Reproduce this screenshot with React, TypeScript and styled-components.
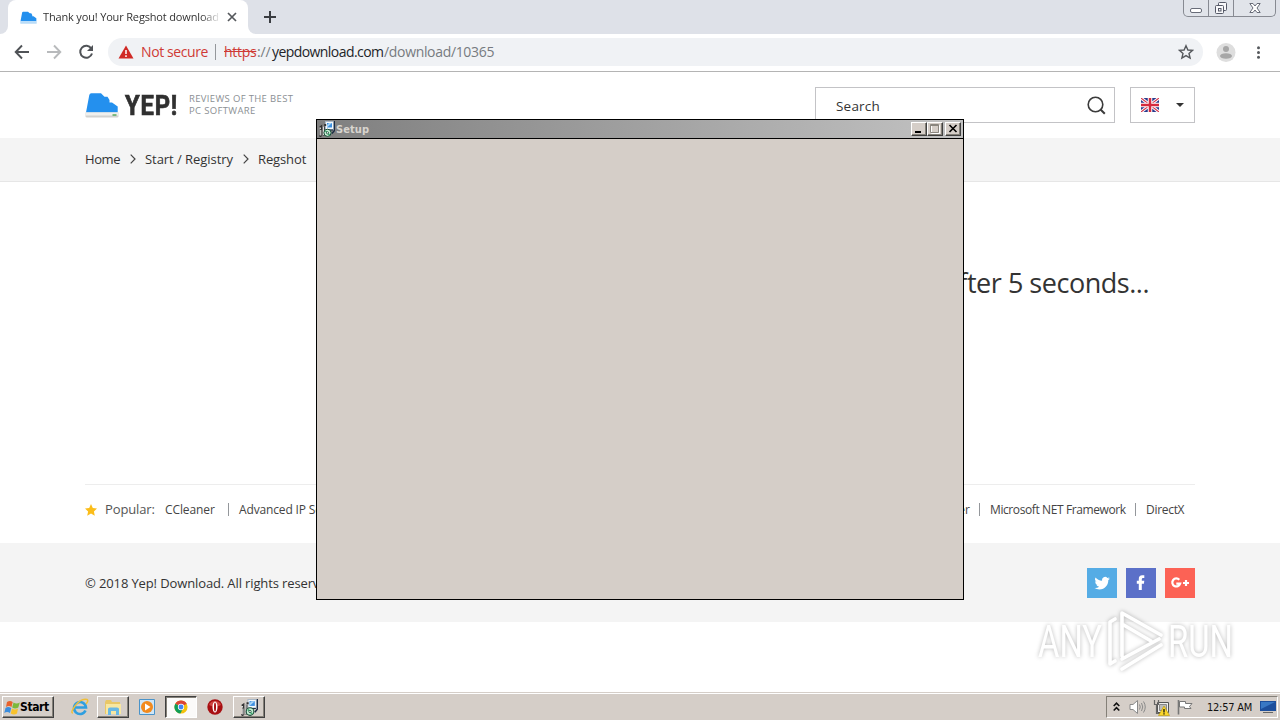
import React from "react";
import styled, { createGlobalStyle, css } from "styled-components";

const GlobalStyle = createGlobalStyle`
  * { box-sizing: border-box; }
  body { margin: 0; background: #fff; overflow: hidden; }
  svg { display: block; flex: none; }
`;

const ui = `"Open Sans", "Noto Sans", sans-serif`;
const tahoma = `"DejaVu Sans Condensed", "DejaVu Sans", sans-serif`;

const Desktop = styled.div`
  position: relative;
  width: 1280px;
  height: 720px;
  display: flex;
  flex-direction: column;
  overflow: hidden;
  background: #fff;
  font-family: ${ui};
  color: #333;
`;

const Label = styled.span<{ $size: number; $ls?: number; $color?: string; $font?: string; $weight?: number; $w?: number; $pb?: number; $pt?: number }>`
  font-size: ${(p) => p.$size}px;
  letter-spacing: ${(p) => p.$ls ?? 0}px;
  color: ${(p) => p.$color ?? "#333"};
  font-family: ${(p) => p.$font ?? ui};
  font-weight: ${(p) => p.$weight ?? 400};
  padding-bottom: ${(p) => p.$pb ?? 0}px;
  padding-top: ${(p) => p.$pt ?? 0}px;
  white-space: nowrap;
  flex: none;
  ${(p) => p.$w && css`width: ${p.$w}px;`}
`;

/* ---------- browser chrome ---------- */
const TabStrip = styled.div`
  flex: none;
  height: 34px;
  display: flex;
  background: #dee1e8;
`;
const TabEdge = styled.div`
  width: 8px;
  background: #fff;
  & > div { height: 34px; background: #dee1e8; border-bottom-right-radius: 8px; }
`;
const TabEdgeRight = styled(TabEdge)`
  & > div { border-bottom-right-radius: 0; border-bottom-left-radius: 8px; }
`;
const Tab = styled.div`
  width: 240px;
  height: 34px;
  padding: 0 11px 0 12px;
  display: flex;
  align-items: center;
  background: #fff;
  border-radius: 8px 8px 0 0;
`;
const TabTitle = styled.div`
  width: 176px;
  margin-left: 6px;
  margin-right: 8px;
  padding-bottom: 1px;
  display: flex;
  mask-image: linear-gradient(to right, #000 158px, transparent 178px);
`;
const NewTab = styled.div`
  width: 28px;
  display: flex;
  align-items: center;
  justify-content: center;
`;
const Caption = styled.div`
  display: flex;
  width: 93px;
  height: 17px;
  margin-left: auto;
  margin-right: 4px;
  border: 1px solid #878a92;
  border-top: 0;
  border-radius: 0 0 5px 5px;
  background: #e1e4ea;
`;
const CaptionButton = styled.div<{ $w: number }>`
  width: ${(p) => p.$w}px;
  display: flex;
  align-items: center;
  justify-content: center;
  & + & { border-left: 1px solid #878a92; }
`;
const Toolbar = styled.div`
  flex: none;
  height: 38px;
  padding: 0 14px;
  display: flex;
  align-items: center;
  border-bottom: 1px solid #b4b4b4;
  background: #fff;
`;
const NavIcons = styled.div`
  width: 94px;
  padding-bottom: 1px;
  display: flex;
  gap: 16px;
`;
const Omnibox = styled.div`
  width: 1095px;
  height: 28px;
  margin-bottom: 1px;
  padding: 0 9px 0 10px;
  display: flex;
  align-items: center;
  border-radius: 14px;
  background: #f0f2f5;
`;
const Pipe = styled.div<{ $h: number; $l: number; $r: number }>`
  width: 1px;
  height: ${(p) => p.$h}px;
  margin: 0 ${(p) => p.$r}px 0 ${(p) => p.$l}px;
  background: #94979b;
`;
const Scheme = styled(Label)`
  text-decoration: line-through;
`;
const Push = styled.div`
  margin-left: auto;
`;
const Profile = styled.div`
  margin-left: 13px;
  margin-right: 14px;
`;

/* ---------- site ---------- */
const Site = styled.main`
  flex: 1;
  display: flex;
  flex-direction: column;
`;
const Header = styled.header`
  height: 66px;
  padding: 0 85px;
  display: flex;
  align-items: center;
`;
const Tagline = styled.div`
  display: flex;
  flex-direction: column;
  margin-left: 11px;
  line-height: 12px;
`;
const Box = styled.div<{ $w: number; $pl: number; $pr: number }>`
  width: ${(p) => p.$w}px;
  height: 36px;
  padding: 0 ${(p) => p.$pr}px 0 ${(p) => p.$pl}px;
  display: flex;
  align-items: center;
  justify-content: space-between;
  border: 1px solid #c3c3c6;
  background: #fff;
`;
const Tools = styled.div`
  display: flex;
  gap: 15px;
  margin-left: auto;
`;
const Crumbs = styled.nav`
  height: 44px;
  padding: 0 85px 1px;
  display: flex;
  align-items: center;
  background: #f4f4f4;
  border-bottom: 1px solid #e6e6e6;
`;
const Message = styled.section`
  height: 302px;
  padding: 81px 131px 0;
  display: flex;
  justify-content: flex-end;
  line-height: 40px;
`;
const Popular = styled.div`
  height: 59px;
  margin: 0 85px;
  padding-bottom: 9px;
  display: flex;
  align-items: center;
  border-top: 1px solid #ededed;
`;
const Footer = styled.footer`
  height: 79px;
  padding: 0 85px;
  display: flex;
  align-items: center;
  background: #f4f4f4;
`;
const Social = styled.div`
  display: flex;
  gap: 9px;
  margin-left: auto;
`;
const SocialButton = styled.div<{ $bg: string }>`
  width: 30px;
  height: 30px;
  background: ${(p) => p.$bg};
`;

/* ---------- setup window ---------- */
const SetupWindow = styled.div`
  position: absolute;
  left: 316px;
  top: 119px;
  width: 648px;
  height: 481px;
  border: 1px solid #000;
  background: #d5cec8;
`;
const TitleBar = styled.div`
  height: 19px;
  padding: 0 2px 0 2px;
  display: flex;
  align-items: center;
  gap: 1px;
  border-bottom: 1px solid #000;
  background: linear-gradient(to right, #7f7f7f, #c2c2c2);
`;
const WinButtons = styled.div`
  display: flex;
  margin-left: auto;
`;
const WinButton = styled.div<{ $gap?: number }>`
  width: 16px;
  height: 14px;
  margin-left: ${(p) => p.$gap ?? 0}px;
  border: 1px solid;
  border-color: #fff #404040 #404040 #fff;
  box-shadow: inset -1px -1px #848078;
  background: #d5cec8;
`;

/* ---------- watermark ---------- */
const Watermark = styled.div`
  position: absolute;
  left: 1030px;
  top: 602px;
  filter: drop-shadow(0 0 2px rgba(0, 0, 0, 0.28));
`;

/* ---------- taskbar ---------- */
const Taskbar = styled.div`
  flex: none;
  height: 28px;
  padding: 3px 2px 2px;
  display: flex;
  align-items: center;
  border-top: 1px solid #d5cec8;
  box-shadow: inset 0 1px #fff;
  background: #d5cec8;
`;
const TaskButton = styled.div<{ $w: number; $ml?: number; $pressed?: boolean }>`
  width: ${(p) => p.$w}px;
  height: 22px;
  margin-left: ${(p) => p.$ml ?? 0}px;
  display: flex;
  align-items: center;
  justify-content: center;
  border: 1px solid;
  border-color: ${(p) => (p.$pressed ? "#404040 #fff #fff #404040" : "#fff #404040 #404040 #fff")};
  box-shadow: ${(p) => (p.$pressed ? "inset 1px 1px #848078" : "inset -1px -1px #848078")};
  background: ${(p) => (p.$pressed ? "#fbfaf9" : "#d5cec8")};
`;
const StartButton = styled(TaskButton)`
  justify-content: flex-start;
  padding-left: 1px;
`;
const QuickIcon = styled.div<{ $ml: number }>`
  margin-left: ${(p) => p.$ml}px;
`;
const Tray = styled.div`
  width: 172px;
  height: 22px;
  margin-left: auto;
  padding: 0 0 0 6px;
  display: flex;
  align-items: center;
  border: 1px solid;
  border-color: #848078 #fff #fff #848078;
`;

/* ---------- icons ---------- */
const DriveLogo = ({ w, h, base }: { w: number; h: number; base?: boolean }) => (
  <svg width={w} height={h} viewBox="0 0 34 26" preserveAspectRatio="none">
    <path d="M1 20.500L4.300 3Q4.700 1.300 6.300 1.300H16L19.500 4.700H22.500L24.500 8V10.500H27L32.700 14.500V20.500Z" fill="#2490ee" />
    <path d="M0.500 20.500H33.500V24.500Q33.500 25.500 32 25.500H2Q0.500 25.500 0.500 24.500Z" fill={base ? "#d2d2d0" : "#b9dcf8"} />
    {base && <path d="M0.500 20.500H33.500V23.500H0.500Z" fill="#f0f0ee" />}
    {base && <path d="M27.500 23h4" stroke="#3fa04a" strokeWidth="1.300" />}
  </svg>
);

const Chevron = () => (
  <svg width="6" height="10" viewBox="0 0 6 10" fill="none" stroke="#444" strokeWidth="1.200">
    <path d="M0.700 0.700L5 5L0.700 9.300" />
  </svg>
);

const InstallerIcon = ({ size }: { size: number }) => (
  <svg width={size} height={size} viewBox="0 0 16 16">
    <path d="M6.500 0.500H14.500V8.500H6.500Z" fill="#f4f8fb" stroke="#aab8c6" />
    <path d="M15.500 0V9.500L13 12.500" fill="none" stroke="#1c2c44" strokeWidth="1.400" />
    <path d="M8 2H13V6.500H8Z" fill="#3d8fe0" />
    <path d="M10 2H13L8 6.500V4Z" fill="#a5d4f8" />
    <path d="M7 9H14" stroke="#1c2c44" />
    <path d="M0.800 6.500L2.200 5.500V14.500L0.500 15.500M6.200 3V5M5 5.500V14.500" fill="none" stroke="#333" strokeWidth="2" />
    <path d="M1.300 6.500V8M1.800 9V14.500M4.600 5.500V14" fill="none" stroke="#eee" strokeWidth="1" />
    <circle cx="8.500" cy="11.800" r="3.600" fill="#c4efd4" stroke="#174a35" />
    <path d="M6.300 10L8 11M9 13L10.800 13.800" stroke="#38a86c" strokeWidth="1.400" />
    <circle cx="8.500" cy="11.800" r="1.100" fill="#fff" stroke="#174a35" strokeWidth="0.800" />
  </svg>
);

const Browser = () => (
  <>
    <TabStrip>
      <TabEdge><div /></TabEdge>
      <Tab>
        <DriveLogo w={17} h={13} />
        <TabTitle><Label $size={11} $ls={-0.16}>Thank you! Your Regshot download</Label></TabTitle>
        <svg width="10" height="10" viewBox="0 0 10 10" stroke="#55585c" strokeWidth="1.700"><path d="M1 1L9 9M9 1L1 9" /></svg>
      </Tab>
      <TabEdgeRight><div /></TabEdgeRight>
      <NewTab>
        <svg width="12" height="12" viewBox="0 0 12 12" stroke="#3a3d42" strokeWidth="2"><path d="M6 0V12M0 6H12" /></svg>
      </NewTab>
      <Caption>
        <CaptionButton $w={24}>
          <svg width="13" height="16" viewBox="0 0 13 16"><rect x="1.500" y="8.500" width="11" height="4" rx="1.500" fill="#fff" stroke="#686c78" /></svg>
        </CaptionButton>
        <CaptionButton $w={26}>
          <svg width="14" height="16" viewBox="0 0 14 16" fill="#f8f8fa" stroke="#555967"><rect x="4.500" y="2.500" width="8" height="8" rx="1" /><rect x="1.500" y="5.500" width="8" height="8" rx="1" /><rect x="4.500" y="8.500" width="2.500" height="2.500" /></svg>
        </CaptionButton>
        <CaptionButton $w={42}>
          <svg width="12" height="16" viewBox="0 0 12 16" fill="#fff" stroke="#686c78"><path d="M0.800 3.500H4L6 6L8 3.500H11.200L8 8L11.200 12.500H8L6 10L4 12.500H0.800L4 8Z" /></svg>
        </CaptionButton>
      </Caption>
    </TabStrip>
    <Toolbar>
      <NavIcons>
        <svg width="16" height="16" viewBox="0 0 16 16" fill="none" stroke="#505357" strokeWidth="1.900"><path d="M15 8H2M8 1.500L1.700 8L8 14.500" /></svg>
        <svg width="16" height="16" viewBox="0 0 16 16" fill="none" stroke="#b8babc" strokeWidth="1.900"><path d="M1 8H14M8 1.500L14.300 8L8 14.500" /></svg>
        <svg width="16" height="16" viewBox="0 0 16 16" fill="none" stroke="#505357" strokeWidth="2"><path d="M13.300 4.500A6 6 0 1 0 14 9.500" /><path d="M15 1V7H9Z" fill="#505357" stroke="none" /></svg>
      </NavIcons>
      <Omnibox>
        <svg width="16" height="14" viewBox="0 0 16 14"><path d="M8 0.500L15.500 13.500H0.500Z" fill="#d02a26" /><path d="M8 5V9M8 10.300V12" stroke="#fff" strokeWidth="1.500" /></svg>
        <Spacer $w={7} />
        <Label $size={14} $ls={-0.4} $color="#cf3a35" $w={67} $pb={2}>Not secure</Label>
        <Pipe $h={16} $l={7} $r={8} />
        <Scheme $size={14} $ls={-0.3} $color="#cf3a35" $w={33} $pb={2}>https</Scheme>
        <Label $size={14} $ls={-0.1} $color="#777b80" $w={15} $pb={2}>://</Label>
        <Label $size={14} $ls={-0.57} $color="#222428" $w={112} $pb={2}>yepdownload.com</Label>
        <Label $size={14} $ls={-0.33} $color="#777b80" $pb={2}>/download/10365</Label>
        <Push>
          <svg width="16" height="16" viewBox="0 0 16 16" fill="none" stroke="#55585c" strokeWidth="1.400"><path d="M8 1.700L9.900 6L14.600 6.400L11 9.500L12.100 14.100L8 11.600L3.900 14.100L5 9.500L1.400 6.400L6.100 6Z" /></svg>
        </Push>
      </Omnibox>
      <Profile>
        <svg width="20" height="20" viewBox="0 0 20 20"><circle cx="10" cy="9.500" r="9.500" fill="#dedede" /><circle cx="10" cy="6" r="3" fill="#a6a6a6" /><ellipse cx="10" cy="13" rx="6" ry="2.800" fill="#a6a6a6" /></svg>
      </Profile>
      <svg width="16" height="16" viewBox="0 0 16 16" fill="#55585c"><circle cx="8.500" cy="2.800" r="1.500" /><circle cx="8.500" cy="7.500" r="1.500" /><circle cx="8.500" cy="12.200" r="1.500" /></svg>
    </Toolbar>
  </>
);

const Flag = () => (
  <svg width="18" height="14" viewBox="0 0 18 14">
    <path fill="#2a3b8c" d="M0 0H18V14H0Z" />
    <path d="M0 0L18 14M18 0L0 14" stroke="#fff" strokeWidth="3" />
    <path d="M0 0L18 14M18 0L0 14" stroke="#d5354a" strokeWidth="1.100" />
    <path d="M9 0V14M0 7H18" stroke="#fff" strokeWidth="4.500" />
    <path d="M9 0V14M0 7H18" stroke="#d52b3e" strokeWidth="2.500" />
  </svg>
);

const Spacer = styled.div<{ $w: number }>`
  width: ${(p) => p.$w}px;
  flex: none;
  display: flex;
  justify-content: center;
`;
const Brand = styled(Label)`
  transform: scaleX(0.88);
  transform-origin: 0 50%;
  -webkit-text-stroke: 0.7px #303030;
`;

const Website = () => (
  <Site>
    <Header>
      <DriveLogo w={34} h={26} base />
      <Spacer $w={6} />
      <Brand $size={27} $font="Roboto, sans-serif" $weight={700} $ls={0.9} $w={53} $color="#303030" $pt={1}>YEP!</Brand>
      <Tagline>
        <Label $size={9.5} $ls={0.34} $color="#8b8f93">REVIEWS OF THE BEST</Label>
        <Label $size={9.5} $ls={0.34} $color="#8b8f93">PC SOFTWARE</Label>
      </Tagline>
      <Tools>
        <Box $w={300} $pl={20} $pr={8}>
          <Label $size={13.5} $ls={0.2} $pt={2}>Search</Label>
          <svg width="19" height="19" viewBox="0 0 19 19" fill="none" stroke="#3b3b3b" strokeWidth="1.600"><circle cx="8.500" cy="8.500" r="7.300" /><path d="M13.500 13.500L17.800 17.800" strokeWidth="2" /></svg>
        </Box>
        <Box $w={65} $pl={10} $pr={10}>
          <Flag />
          <svg width="8" height="4" viewBox="0 0 8 4" fill="#333"><path d="M0 0H8L4 4Z" /></svg>
        </Box>
      </Tools>
    </Header>
    <Crumbs>
      <Label $size={13} $w={35} $ls={-0.4}>Home</Label>
      <Spacer $w={25}><Chevron /></Spacer>
      <Label $size={13} $w={89} $ls={-0.05}>Start / Registry</Label>
      <Spacer $w={24}><Chevron /></Spacer>
      <Label $size={13} $ls={-0.12}>Regshot</Label>
    </Crumbs>
    <Message>
      <Label $size={27} $ls={-0.48}>Your download will start automatically after 5 seconds...</Label>
    </Message>
    <Popular>
      <svg width="12" height="12" viewBox="0 0 12 12" fill="#fbbd1a"><path d="M6 0L7.800 4L12 4.500L8.900 7.400L9.800 11.800L6 9.600L2.200 11.800L3.100 7.400L0 4.500L4.200 4Z" /></svg>
      <Spacer $w={8} />
      <Label $size={13} $w={60} $color="#555" $ls={-0.12} $pb={2}>Popular:</Label>
      <Label $size={12} $w={50} $ls={-0.1} $color="#444">CCleaner</Label>
      <Pipe $h={13} $l={13} $r={10} />
      <Label $size={12} $ls={-0.15} $color="#444">Advanced IP Scanner</Label>
      <Push />
      <Label $size={12} $color="#444">Download Master Installer</Label>
      <Pipe $h={13} $l={9} $r={10} />
      <Label $size={12} $w={136} $ls={-0.4} $color="#444">Microsoft NET Framework</Label>
      <Pipe $h={13} $l={9} $r={10} />
      <Label $size={12} $w={49} $ls={-0.3} $color="#444">DirectX</Label>
    </Popular>
    <Footer>
      <Label $size={13} $ls={-0.12}>© 2018 Yep! Download. All rights reserved.</Label>
      <Social>
        <SocialButton $bg="#55ace5">
          <svg width="30" height="30" viewBox="0 0 30 30"><path transform="translate(7.500 7.500) scale(.64)" fill="#fff" d="M23.950 4.570a10 10 0 0 1-2.820.770 4.960 4.960 0 0 0 2.160-2.720c-.950.550-2 .950-3.130 1.180a4.920 4.920 0 0 0-8.380 4.480C7.690 8.100 4.070 6.130 1.640 3.160a4.900 4.900 0 0 0 1.520 6.570 4.900 4.900 0 0 1-2.230-.610v.060a4.920 4.920 0 0 0 3.950 4.830 5 5 0 0 1-2.210.080 4.940 4.940 0 0 0 4.600 3.420A9.870 9.870 0 0 1 0 19.540a14 14 0 0 0 7.550 2.210c9.050 0 14-7.500 14-13.980 0-.210 0-.420-.020-.630a9.940 9.940 0 0 0 2.460-2.550z" /></svg>
        </SocialButton>
        <SocialButton $bg="#5b70c8">
          <svg width="30" height="30" viewBox="0 0 30 30"><path d="M12.800 22V15.700H10.800V12.800H12.800V11Q12.800 7.300 16.200 7.300H18.300V10H17Q15.800 10 15.800 11.200V12.800H18.300L17.900 15.700H15.800V22Z" fill="#fff" /></svg>
        </SocialButton>
        <SocialButton $bg="#fc6255">
          <svg width="30" height="30" viewBox="0 0 30 30" fill="none" stroke="#fff" strokeWidth="2.200"><path d="M14.300 11.800A4 4 0 1 0 15.100 15.700H11.300M18 15H24M21 12V18" /></svg>
        </SocialButton>
      </Social>
    </Footer>
  </Site>
);

const Setup = () => (
  <SetupWindow>
    <TitleBar>
      <InstallerIcon size={16} />
      <Label $size={11} $font={tahoma} $weight={700} $color="#d8d4ce" $ls={0.1}>Setup</Label>
      <WinButtons>
        <WinButton><svg width="14" height="12" viewBox="0 0 14 12"><path d="M3 8H9V10H3Z" /></svg></WinButton>
        <WinButton><svg width="14" height="12" viewBox="0 0 14 12" fill="none"><path d="M3.500 2.500H11.500V10.500H3.500Z" stroke="#fff" /><path d="M2.500 1.500H10.500V9.500H2.500ZM2.500 2.500H10.500" stroke="#8a867f" /></svg></WinButton>
        <WinButton $gap={2}><svg width="14" height="12" viewBox="0 0 14 12"><path d="M3.500 2L10.500 9M10.500 2L3.500 9" stroke="#000" strokeWidth="1.600" /></svg></WinButton>
      </WinButtons>
    </TitleBar>
  </SetupWindow>
);

const WatermarkText = styled.text`
  font-family: Roboto, sans-serif;
  font-weight: 400;
  font-size: 45px;
  fill: #fff;
`;

const AnyRun = () => (
  <Watermark>
    <svg width="240" height="84" viewBox="0 0 240 84">
      <WatermarkText x="8" y="55" textLength="64" lengthAdjust="spacingAndGlyphs">ANY</WatermarkText>
      <WatermarkText x="138" y="55" textLength="65" lengthAdjust="spacingAndGlyphs">RUN</WatermarkText>
      <g fill="none" stroke="#fff" strokeWidth="3.600" strokeLinecap="round" strokeLinejoin="round">
        <path d="M85 17L80 20V62L85 59" />
        <path d="M92 54V11L131 33M92 22L121 39M92 57L129 37M92 67L131 43" />
      </g>
    </svg>
  </Watermark>
);

const Bottom = () => (
  <Taskbar>
    <StartButton $w={52}>
      <svg width="16" height="15" viewBox="0 0 16 15"><path d="M3 2Q6 0 8.700 2L7.500 7Q5 5 2 7Z" fill="#e8622c" /><path d="M9.500 2.500Q12.500 4.500 15.800 2.500L14.300 7.500Q11 9.500 8.200 7.500Z" fill="#7cb93c" /><path d="M1.500 8Q4 6 7.200 8L6 13Q3 11 0.300 13Z" fill="#3b8ddd" /><path d="M8 8.500Q11 10.500 14 8.500L13 13.500Q10 15.500 6.700 13.500Z" fill="#f8c22c" /></svg>
      <Label $size={12} $font={tahoma} $weight={700} $color="#000" $ls={-0.4}>Start</Label>
    </StartButton>
    <QuickIcon $ml={17}>
      <svg width="18" height="18" viewBox="0 0 18 18" fill="none"><path d="M14.500 12.500A6 6 0 1 1 15 9.500H4" stroke="#2f9fe0" strokeWidth="2.600" /><path d="M2 15Q-1 15 4 8Q10 0 16 1.500Q18 2.500 15 6" stroke="#efbf3a" strokeWidth="1.400" /></svg>
    </QuickIcon>
    <TaskButton $w={32} $ml={8}>
      <svg width="18" height="17" viewBox="0 0 18 17"><path d="M1 3L2 1H7L8 3H16V15H1Z" fill="#e9c766" /><path d="M2 5H17V15H2Z" fill="#f8e7a0" /><path d="M4 16V10Q4 8.500 6 8.500H13Q15 8.500 15 10V16H12V12H7V16Z" fill="#69b8e4" /></svg>
    </TaskButton>
    <QuickIcon $ml={10}>
      <svg width="16" height="16" viewBox="0 0 16 16"><path d="M0.500 0.500H15.500V15.500H0.500Z" fill="#cfe6f7" stroke="#4a93c9" /><circle cx="8" cy="8" r="6" fill="#f28a1e" /><path d="M6 4.500L11.500 8L6 11.500Z" fill="#fff" /></svg>
    </QuickIcon>
    <TaskButton $w={32} $ml={10} $pressed>
      <svg width="14" height="14" viewBox="0 0 16 16"><circle cx="8" cy="8" r="7.500" fill="#f4c20d" /><path d="M8 8L1.500 4.200A7.500 7.500 0 0 1 14.500 4.200Z" fill="#db4437" /><path d="M8 8L1.500 4.200A7.500 7.500 0 0 0 7.300 15.500L10.500 9.500Z" fill="#0f9d58" /><circle cx="8" cy="8" r="3.600" fill="#fff" /><circle cx="8" cy="8" r="2.800" fill="#4285f4" /></svg>
    </TaskButton>
    <QuickIcon $ml={10}>
      <svg width="16" height="16" viewBox="0 0 16 16"><circle cx="8" cy="8" r="7.700" fill="#a80f12" /><path d="M2 6A6.500 6.500 0 0 1 14 6Q8 9 2 6Z" fill="#cf4542" /><ellipse cx="8" cy="8" rx="2.500" ry="5.600" fill="#fff" /><ellipse cx="8" cy="8" rx="1" ry="4.600" fill="#a80f12" /></svg>
    </QuickIcon>
    <TaskButton $w={32} $ml={10}><InstallerIcon size={17} /></TaskButton>
    <Tray>
      <svg width="7" height="10" viewBox="0 0 7 10" fill="none" stroke="#111" strokeWidth="1.600"><path d="M0.700 4L3.500 1.200L6.300 4M0.700 8.500L3.500 5.700L6.300 8.500" /></svg>
      <Spacer $w={9} />
      <svg width="17" height="16" viewBox="0 0 17 16" fill="none" stroke="#8a8a8a"><path d="M1 5.500H4L8.500 1.500V14.500L4 10.500H1Z" fill="#fff" /><path d="M10.500 5.500Q12 8 10.500 10.500M12.500 4Q15 8 12.500 12M14.500 2.500Q18 8 14.500 13.500" /></svg>
      <Spacer $w={7} />
      <svg width="17" height="17" viewBox="0 0 17 17"><path d="M4.500 3.500H15.500V13.500H4.500Z" fill="#eee" stroke="#555" /><path d="M6.500 5.500H13.500V11.500H6.500Z" fill="#bbb" stroke="#888" /><path d="M1.500 1V5.500H5.500V1M3.500 5V14.500H7" fill="none" stroke="#666" strokeWidth="1.200" /><path d="M11 7L16.500 16.500H5.500Z" fill="#fbd62d" stroke="#b79505" strokeWidth="0.600" /><path d="M11 10V13.500M11 14.300V15.500" stroke="#111" strokeWidth="1.300" /></svg>
      <Spacer $w={7} />
      <svg width="17" height="16" viewBox="0 0 17 16" fill="#fff" stroke="#777"><path d="M2.500 2.500H8.500V4.500H15L12.500 7.500L14 9.500H7.500V8H2.500Z" /><path d="M1.500 1V15.500" strokeWidth="1.600" /></svg>
      <Spacer $w={13} />
      <Label $size={11} $font={tahoma} $color="#111" $w={47} $ls={-0.25}>12:57 AM</Label>
      <Spacer $w={6} />
      <svg width="16" height="14" viewBox="0 0 16 14"><path d="M0 1H16V11H0Z" fill="#1d4f9c" /><path d="M1 2H15L1 9Z" fill="#3978c4" /><path d="M3 12H13V13H3Z" fill="#666" /></svg>
    </Tray>
  </Taskbar>
);

export default function App() {
  return (
    <>
      <GlobalStyle />
      <Desktop>
        <Browser />
        <Website />
        <Bottom />
        <Setup />
        <AnyRun />
      </Desktop>
    </>
  );
}
